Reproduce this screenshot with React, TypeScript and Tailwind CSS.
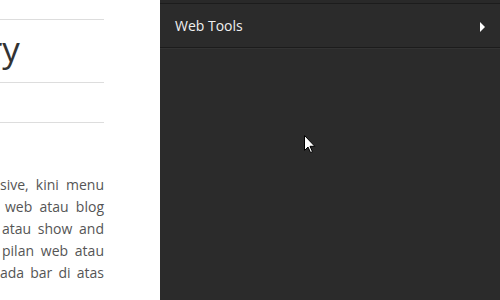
import React from "react";

const lines: { words: string[]; pl: number }[] = [
  { words: ["sive,", "kini", "menu"], pl: 0 },
  { words: ["web", "atau", "blog"], pl: 5 },
  { words: ["atau", "show", "and"], pl: 2 },
  { words: ["pilan", "web", "atau"], pl: 2 },
  { words: ["ada", "bar", "di", "atas"], pl: 0 },
];

export default function App() {
  return (
    <div
      className="flex w-[500px] h-[300px] overflow-hidden"
      style={{ fontFamily: '"Open Sans", "Noto Sans", sans-serif' }}
    >
      <div className="w-[160px] shrink-0 bg-white overflow-hidden">
        <div className="w-[104px]">
          <div className="h-[19px]" />
          <div className="border-t border-[#dddddd]" />
          <div className="h-[62px] pt-[11px] overflow-hidden">
            <div className="-ml-[12px] text-[35px] leading-[35px] text-[#333333] whitespace-nowrap">
              ry
            </div>
          </div>
          <div className="border-t border-[#dddddd]" />
          <div className="h-[39px]" />
          <div className="border-t border-[#dddddd]" />
          <div className="h-[51px]" />
          <div className="text-[14px] leading-[22px] text-[#555555]">
            {lines.map((l, i) => (
              <div
                key={i}
                className="flex justify-between whitespace-nowrap"
                style={{ paddingLeft: l.pl }}
              >
                {l.words.map((w, j) => (
                  <span key={j}>{w}</span>
                ))}
              </div>
            ))}
          </div>
        </div>
      </div>
      <div className="flex-1 bg-[#2b2b2b] relative">
        <div className="h-[3px] bg-[#292929]" />
        <div className="border-t border-[#1c1c1c]" />
        <div className="flex items-center justify-between pl-[15px] pr-[15px] pt-[12px] pb-[11px]">
          <span className="text-[14px] leading-[20px] text-[#f0f0f0]">Web Tools</span>
          <svg width="5" height="10" viewBox="0 0 5 10" className="mt-[1px]">
            <path d="M0 0 L5 5 L0 10 Z" fill="#ffffff" />
          </svg>
        </div>
        <div className="border-t border-[#1c1c1c]" />
        <div className="border-t border-[#333333]" />
        <svg
          width="14"
          height="20"
          viewBox="0 0 14 20"
          className="absolute left-[144px] top-[135px]"
        >
          <path
            d="M0.5 0.5 L0.5 15.5 L4 12 L6.5 17.5 L8.5 16.7 L6 11.3 L10.8 11.3 Z"
            fill="#ffffff"
            stroke="#000000"
            strokeWidth="1"
            strokeLinejoin="miter"
          />
        </svg>
      </div>
    </div>
  );
}
